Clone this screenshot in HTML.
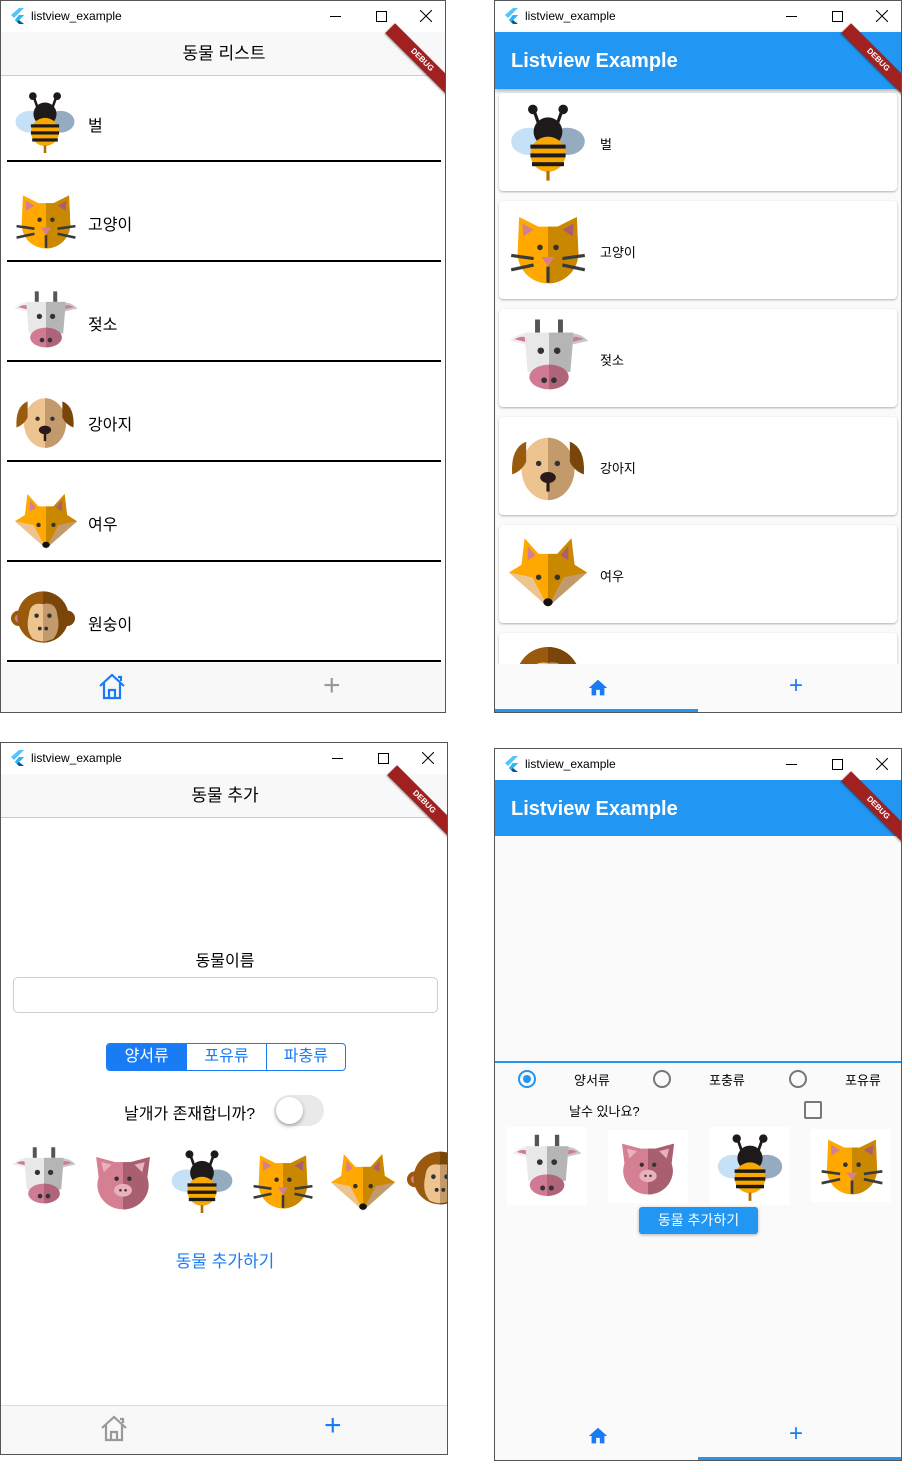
<!DOCTYPE html>
<html><head><meta charset="utf-8">
<style>
*{margin:0;padding:0;box-sizing:border-box}
body{width:912px;height:1472px;background:#fff;position:relative;overflow:hidden;font-family:"Liberation Sans","Noto Sans CJK KR",sans-serif;color:#000}
.a{position:absolute}
.win{position:absolute;border:1px solid #555;background:#fff;overflow:hidden}
.tb{position:absolute;left:0;right:0;top:0;height:31px;background:#fff;font-size:12px}
.tb .t{position:absolute;left:30px;top:8px;font-family:"Liberation Sans",sans-serif}
.tb .logo{position:absolute;left:10px;top:7px}
.tb .mn{position:absolute;right:104px;top:15px;width:11px;height:1px;background:#000}
.tb .mx{position:absolute;right:58px;top:10px;width:11px;height:11px;border:1px solid #000}
.tb .cl{position:absolute;right:13px;top:9px}
.debug{position:absolute;right:-22px;top:10px;width:90px;height:14px;background:#a12020;transform:rotate(45deg);color:#fff;font-size:8px;font-weight:bold;text-align:center;line-height:14px;box-shadow:0 1px 2px rgba(0,0,0,.4)}
.div{position:absolute;left:6px;width:434px;height:2px;background:#000}
.card{position:absolute;left:4px;width:398px;height:98px;background:#fff;border-radius:4px;box-shadow:0 1px 2px rgba(0,0,0,.3)}
svg.ic{position:absolute}
</style></head><body>
<svg width="0" height="0" style="position:absolute">
<defs>
<symbol id="x" viewBox="0 0 12 12"><path d="M0 0 L12 12 M12 0 L0 12" stroke="#000" stroke-width="1"/></symbol>
<symbol id="bee" viewBox="0 0 100 100">
<ellipse cx="26" cy="48" rx="22" ry="17" fill="#c6e0f5"/><ellipse cx="74" cy="48" rx="22" ry="17" fill="#94abc0"/>
<path d="M38 25 L32 8 M62 25 L68 8" stroke="#1e1a1a" stroke-width="4"/>
<circle cx="31" cy="8" r="6" fill="#1e1a1a"/><circle cx="69" cy="8" r="6" fill="#1e1a1a"/>
<circle cx="50" cy="36" r="18" fill="#1e1a1a"/>
<circle cx="50" cy="64" r="22" fill="#f9a800"/>
<rect x="28" y="52" width="44" height="5" fill="#1e1a1a"/><rect x="28" y="63" width="44" height="5" fill="#1e1a1a"/><rect x="30" y="74" width="40" height="5" fill="#1e1a1a"/>
<rect x="48" y="85" width="4" height="12" fill="#b07000"/>
</symbol>
<symbol id="cat" viewBox="0 0 100 100">
<path d="M12 55 L14 10 L38 22 L62 22 L86 10 L88 55 A38 38 0 0 1 12 55Z" fill="#ffa800"/>
<path d="M50 22 L62 22 L86 10 L88 55 A38 38 0 0 1 50 93Z" fill="#c98800"/>
<path d="M18 18 L32 26 L19 34Z" fill="#d47f92"/><path d="M82 18 L68 26 L81 34Z" fill="#a86070"/>
<circle cx="40" cy="48" r="3.5" fill="#333"/><circle cx="60" cy="48" r="3.5" fill="#333"/>
<path d="M42 60 L58 60 L50 72Z" fill="#d47f92"/>
<path d="M4 58 L32 62 M4 76 L32 70 M96 58 L68 62 M96 76 L68 70 M50 72 L50 92" stroke="#3a3a3a" stroke-width="4"/>
</symbol>
<symbol id="cow" viewBox="0 6 100 88">
<path d="M36 8 L36 24 M64 8 L64 24" stroke="#555" stroke-width="6"/>
<path d="M2 34 Q16 20 30 28 L28 40Z" fill="#eee"/><path d="M98 34 Q84 20 70 28 L72 40Z" fill="#c8c8c8"/>
<path d="M8 32 Q18 26 26 32 L24 36Z" fill="#d07b93"/><path d="M92 32 Q82 26 74 32 L76 36Z" fill="#d07b93"/>
<path d="M20 24 L80 24 L76 72 L24 72Z" fill="#e8e8e8"/><path d="M50 24 L80 24 L76 72 L50 72Z" fill="#b5b5b5"/>
<ellipse cx="50" cy="78" rx="24" ry="15" fill="#d07b93"/><path d="M50 63 A24 15 0 0 1 50 93Z" fill="#b0647a"/>
<circle cx="40" cy="46" r="4" fill="#333"/><circle cx="60" cy="46" r="4" fill="#333"/>
<circle cx="44" cy="82" r="3.5" fill="#333"/><circle cx="56" cy="82" r="3.5" fill="#333"/>
</symbol>
<symbol id="dog" viewBox="0 0 100 100">
<ellipse cx="50" cy="55" rx="34" ry="40" fill="#edc48f"/><path d="M50 15 A34 40 0 0 1 50 95Z" fill="#c29a6c"/>
<path d="M22 20 Q2 28 4 62 Q16 58 22 46Z" fill="#9a5a0d"/><path d="M78 20 Q98 28 96 62 Q84 58 78 46Z" fill="#7a4508"/>
<circle cx="38" cy="48" r="3.5" fill="#333"/><circle cx="62" cy="48" r="3.5" fill="#333"/>
<ellipse cx="50" cy="66" rx="10" ry="7" fill="#2a1a1a"/><rect x="48" y="66" width="4" height="18" fill="#2a1a1a"/>
</symbol>
<symbol id="fox" viewBox="0 0 100 100">
<path d="M20 8 L38 28 L62 28 L80 8 L84 42 L100 52 L50 96 L0 52 L16 42Z" fill="#ffa800"/>
<path d="M50 28 L62 28 L80 8 L84 42 L100 52 L50 96Z" fill="#c98800"/>
<path d="M24 18 L34 30 L24 36Z" fill="#d47f92"/><path d="M76 18 L66 30 L76 36Z" fill="#a86070"/>
<path d="M0 52 L30 58 L50 96Z" fill="#edc48f"/><path d="M100 52 L70 58 L50 96Z" fill="#c29a6c"/>
<circle cx="38" cy="58" r="3.5" fill="#333"/><circle cx="62" cy="58" r="3.5" fill="#333"/>
<ellipse cx="50" cy="90" rx="6" ry="5" fill="#111"/>
</symbol>
<symbol id="monkey" viewBox="0 0 100 100">
<circle cx="12" cy="52" r="12" fill="#9a5a0d"/><circle cx="88" cy="52" r="12" fill="#7a4508"/>
<circle cx="12" cy="52" r="6" fill="#d47f92"/>
<circle cx="50" cy="50" r="40" fill="#9a5a0d"/><path d="M50 10 A40 40 0 0 1 50 90Z" fill="#7a4508"/>
<path d="M50 30 Q30 26 28 46 Q22 70 34 84 Q50 92 66 84 Q78 70 72 46 Q70 26 50 30Z" fill="#edc48f"/>
<path d="M50 30 Q70 26 72 46 Q78 70 66 84 Q58 88 50 88Z" fill="#c29a6c"/>
<circle cx="40" cy="48" r="3.5" fill="#333"/><circle cx="60" cy="48" r="3.5" fill="#333"/>
<circle cx="45" cy="68" r="3" fill="#333"/><circle cx="55" cy="68" r="3" fill="#333"/>
</symbol>
<symbol id="pig" viewBox="0 0 100 100">
<path d="M8 14 L38 22 L62 22 L92 14 L88 46 A40 38 0 1 1 12 46Z" fill="#d47f92"/>
<path d="M50 22 L62 22 L92 14 L88 46 A40 38 0 0 1 50 96Z" fill="#a86070"/>
<path d="M16 22 L32 26 L20 38Z" fill="#eab0bc"/><path d="M84 22 L68 26 L80 38Z" fill="#eab0bc"/>
<circle cx="40" cy="48" r="3.5" fill="#333"/><circle cx="60" cy="48" r="3.5" fill="#333"/>
<ellipse cx="50" cy="66" rx="14" ry="10" fill="#eab0bc"/><circle cx="46" cy="66" r="2" fill="#333"/><circle cx="54" cy="66" r="2" fill="#333"/>
</symbol>
<symbol id="flut" viewBox="0 0 14 16"><path d="M8 0 L13 0 L3 10 L0 7Z" fill="#54c5f8"/><path d="M8 7 L13 7 L8 12 L13 16 L8 16 L4 12Z" fill="#01579b"/><path d="M8 7 L13 7 L6 14 L4 12Z" fill="#29b6f6"/></symbol>
<symbol id="home" viewBox="0 0 24 24"><path d="M10 20v-6h4v6h5v-8h3L12 3 2 12h3v8z"/></symbol>
<symbol id="homeo" viewBox="0 0 30 30"><path d="M3 15 L15 4 L27 15 M7 12 V27 H23 V12 M12 27 V19 H18 V27 M21 6 H24 V10" fill="none" stroke-width="2.2"/></symbol>
</defs></svg>

<!-- WINDOW 1 -->
<div class="win" style="left:0;top:0;width:446px;height:713px">
<div class="tb"><svg class="logo" width="14" height="16"><use href="#flut"/></svg><span class="t">listview_example</span><div class="mn"></div><div class="mx"></div><svg class="cl" width="12" height="12"><use href="#x"/></svg></div>
<div class="a" style="left:0;top:31px;width:446px;height:44px;background:#f8f8f8;border-bottom:1px solid #ccc;text-align:center;font-size:17px;line-height:44px">동물 리스트</div>
<div class="debug" style="top:52px">DEBUG</div>
<svg class="ic" style="left:12px;top:90px" width="64" height="64"><use href="#bee"/></svg><div class="a" style="left:87px;top:111px;font-size:16px">벌</div>
<div class="div" style="top:159px"></div>
<svg class="ic" style="left:13px;top:188px" width="64" height="64"><use href="#cat"/></svg><div class="a" style="left:87px;top:210px;font-size:16px">고양이</div>
<div class="div" style="top:259px"></div>
<svg class="ic" style="left:12px;top:289px" width="66" height="58"><use href="#cow"/></svg><div class="a" style="left:87px;top:310px;font-size:16px">젖소</div>
<div class="div" style="top:359px"></div>
<svg class="ic" style="left:12px;top:388px" width="64" height="62"><use href="#dog"/></svg><div class="a" style="left:87px;top:410px;font-size:16px">강아지</div>
<div class="div" style="top:459px"></div>
<svg class="ic" style="left:13px;top:488px" width="64" height="62"><use href="#fox"/></svg><div class="a" style="left:87px;top:510px;font-size:16px">여우</div>
<div class="div" style="top:559px"></div>
<svg class="ic" style="left:9px;top:584px" width="66" height="64"><use href="#monkey"/></svg><div class="a" style="left:87px;top:610px;font-size:16px">원숭이</div>
<div class="div" style="top:659px"></div>
<div class="a" style="left:0;top:662px;width:446px;height:51px;background:#f8f8f8"></div>
<svg class="ic" style="left:96px;top:670px;stroke:#1a7cf5" width="30" height="30"><use href="#homeo"/></svg>
<div class="a" style="left:322px;top:668px;font-size:30px;color:#999;font-weight:200">+</div>
</div>

<!-- WINDOW 2 -->
<div class="win" style="left:494px;top:0;width:408px;height:713px;background:#fafafa">
<div class="tb"><svg class="logo" width="14" height="16"><use href="#flut"/></svg><span class="t">listview_example</span><div class="mn"></div><div class="mx"></div><svg class="cl" width="12" height="12"><use href="#x"/></svg></div>
<div class="a" style="left:0;top:31px;width:408px;height:57px;background:#2196f3;box-shadow:0 2px 4px rgba(0,0,0,.3);color:#fff;font-size:20px;font-weight:bold;padding:18px 0 0 16px">Listview Example</div>
<div class="debug" style="top:52px">DEBUG</div>
<div class="card" style="top:92px"></div><svg class="ic" style="left:13px;top:102px" width="80" height="80"><use href="#bee"/></svg><div class="a" style="left:105px;top:133px;font-size:13px">벌</div>
<div class="card" style="top:200px"></div><svg class="ic" style="left:13px;top:208px" width="80" height="80"><use href="#cat"/></svg><div class="a" style="left:105px;top:241px;font-size:13px">고양이</div>
<div class="card" style="top:308px"></div><svg class="ic" style="left:13px;top:316px" width="82" height="74"><use href="#cow"/></svg><div class="a" style="left:105px;top:349px;font-size:13px">젖소</div>
<div class="card" style="top:416px"></div><svg class="ic" style="left:13px;top:425px" width="80" height="78"><use href="#dog"/></svg><div class="a" style="left:105px;top:457px;font-size:13px">강아지</div>
<div class="card" style="top:524px"></div><svg class="ic" style="left:13px;top:531px" width="80" height="78"><use href="#fox"/></svg><div class="a" style="left:105px;top:565px;font-size:13px">여우</div>
<div class="card" style="top:632px"></div><svg class="ic" style="left:13px;top:638px" width="80" height="80"><use href="#monkey"/></svg>
<div class="a" style="left:0;top:663px;width:408px;height:50px;background:#fafafa"></div>
<svg class="ic" style="left:92px;top:676px;fill:#1a7cf5" width="22" height="22"><use href="#home"/></svg>
<div class="a" style="left:294px;top:671px;font-size:24px;color:#1a7cf5">+</div>
<div class="a" style="left:0;top:708px;width:203px;height:3px;background:#2196f3"></div>
</div>

<!-- WINDOW 3 -->
<div class="win" style="left:0;top:742px;width:448px;height:713px">
<div class="tb"><svg class="logo" width="14" height="16"><use href="#flut"/></svg><span class="t">listview_example</span><div class="mn"></div><div class="mx"></div><svg class="cl" width="12" height="12"><use href="#x"/></svg></div>
<div class="a" style="left:0;top:31px;width:448px;height:44px;background:#f8f8f8;border-bottom:1px solid #ccc;text-align:center;font-size:17px;line-height:44px">동물 추가</div>
<div class="debug" style="top:52px">DEBUG</div>
<div class="a" style="left:0;top:204px;width:448px;text-align:center;font-size:16px">동물이름</div>
<div class="a" style="left:12px;top:234px;width:425px;height:36px;border:1px solid #ccc;border-radius:5px"></div>
<div class="a" style="left:105px;top:300px;width:240px;height:28px;border:1px solid #1a7cf5;border-radius:4px;overflow:hidden;display:flex;font-size:16px;color:#1a7cf5;line-height:26px;text-align:center">
<div style="width:80px;background:#1a7cf5;color:#fff">양서류</div><div style="width:80px;border-left:1px solid #1a7cf5">포유류</div><div style="width:80px;border-left:1px solid #1a7cf5">파충류</div></div>
<div class="a" style="left:123px;top:357px;font-size:16px">날개가 존재합니까?</div>
<div class="a" style="left:273px;top:352px;width:50px;height:31px;border-radius:16px;background:#e9e9ea"></div>
<div class="a" style="left:275px;top:354px;width:27px;height:27px;border-radius:50%;background:#fff;box-shadow:0 2px 4px rgba(0,0,0,.3)"></div>
<svg class="ic" style="left:10px;top:402px" width="66" height="60"><use href="#cow"/></svg>
<svg class="ic" style="left:90px;top:405px" width="64" height="64"><use href="#pig"/></svg>
<svg class="ic" style="left:168px;top:406px" width="66" height="66"><use href="#bee"/></svg>
<svg class="ic" style="left:250px;top:406px" width="64" height="64"><use href="#cat"/></svg>
<svg class="ic" style="left:330px;top:406px" width="64" height="64"><use href="#fox"/></svg>
<svg class="ic" style="left:406px;top:402px" width="66" height="66"><use href="#monkey"/></svg>
<div class="a" style="left:0;top:504px;width:448px;text-align:center;font-size:17px;color:#1a7cf5">동물 추가하기</div>
<div class="a" style="left:0;top:662px;width:448px;height:51px;background:#f8f8f8;border-top:1px solid #ddd"></div>
<svg class="ic" style="left:98px;top:670px;stroke:#999" width="30" height="30"><use href="#homeo"/></svg>
<div class="a" style="left:323px;top:666px;font-size:30px;color:#1a7cf5;font-weight:200">+</div>
</div>

<!-- WINDOW 4 -->
<div class="win" style="left:494px;top:748px;width:408px;height:713px;background:#fafafa">
<div class="tb"><svg class="logo" width="14" height="16"><use href="#flut"/></svg><span class="t">listview_example</span><div class="mn"></div><div class="mx"></div><svg class="cl" width="12" height="12"><use href="#x"/></svg></div>
<div class="a" style="left:0;top:31px;width:408px;height:56px;background:#2196f3;color:#fff;font-size:20px;font-weight:bold;padding:18px 0 0 16px">Listview Example</div>
<div class="debug" style="top:52px">DEBUG</div>
<div class="a" style="left:0;top:312px;width:408px;height:2px;background:#2196f3"></div>
<div class="a" style="left:23px;top:321px;width:18px;height:18px;border:2px solid #2196f3;border-radius:50%"></div><div class="a" style="left:28px;top:326px;width:8px;height:8px;background:#2196f3;border-radius:50%"></div>
<div class="a" style="left:79px;top:321px;font-size:13px">양서류</div>
<div class="a" style="left:158px;top:321px;width:18px;height:18px;border:2px solid #777;border-radius:50%"></div>
<div class="a" style="left:214px;top:321px;font-size:13px">포충류</div>
<div class="a" style="left:294px;top:321px;width:18px;height:18px;border:2px solid #777;border-radius:50%"></div>
<div class="a" style="left:350px;top:321px;font-size:13px">포유류</div>
<div class="a" style="left:74px;top:352px;font-size:13px">날수 있나요?</div>
<div class="a" style="left:309px;top:352px;width:18px;height:18px;border:2px solid #777;border-radius:2px"></div>
<div class="a" style="left:12px;top:378px;width:80px;height:78px;background:#fff"></div><svg class="ic" style="left:16px;top:384px" width="72" height="64"><use href="#cow"/></svg>
<div class="a" style="left:113px;top:381px;width:80px;height:73px;background:#fff"></div><svg class="ic" style="left:121px;top:386px" width="64" height="62"><use href="#pig"/></svg>
<div class="a" style="left:215px;top:378px;width:80px;height:78px;background:#fff"></div><svg class="ic" style="left:220px;top:384px" width="70" height="70"><use href="#bee"/></svg>
<div class="a" style="left:316px;top:380px;width:80px;height:73px;background:#fff"></div><svg class="ic" style="left:324px;top:384px" width="66" height="66"><use href="#cat"/></svg>
<div class="a" style="left:144px;top:458px;width:119px;height:27px;background:#2196f3;border-radius:3px;box-shadow:0 1px 3px rgba(0,0,0,.3);color:#fff;font-size:14px;text-align:center;line-height:27px">동물 추가하기</div>
<svg class="ic" style="left:92px;top:676px;fill:#1a7cf5" width="22" height="22"><use href="#home"/></svg>
<div class="a" style="left:294px;top:671px;font-size:24px;color:#1a7cf5">+</div>
<div class="a" style="left:203px;top:708px;width:205px;height:3px;background:#2196f3"></div>
</div>
</body></html>
